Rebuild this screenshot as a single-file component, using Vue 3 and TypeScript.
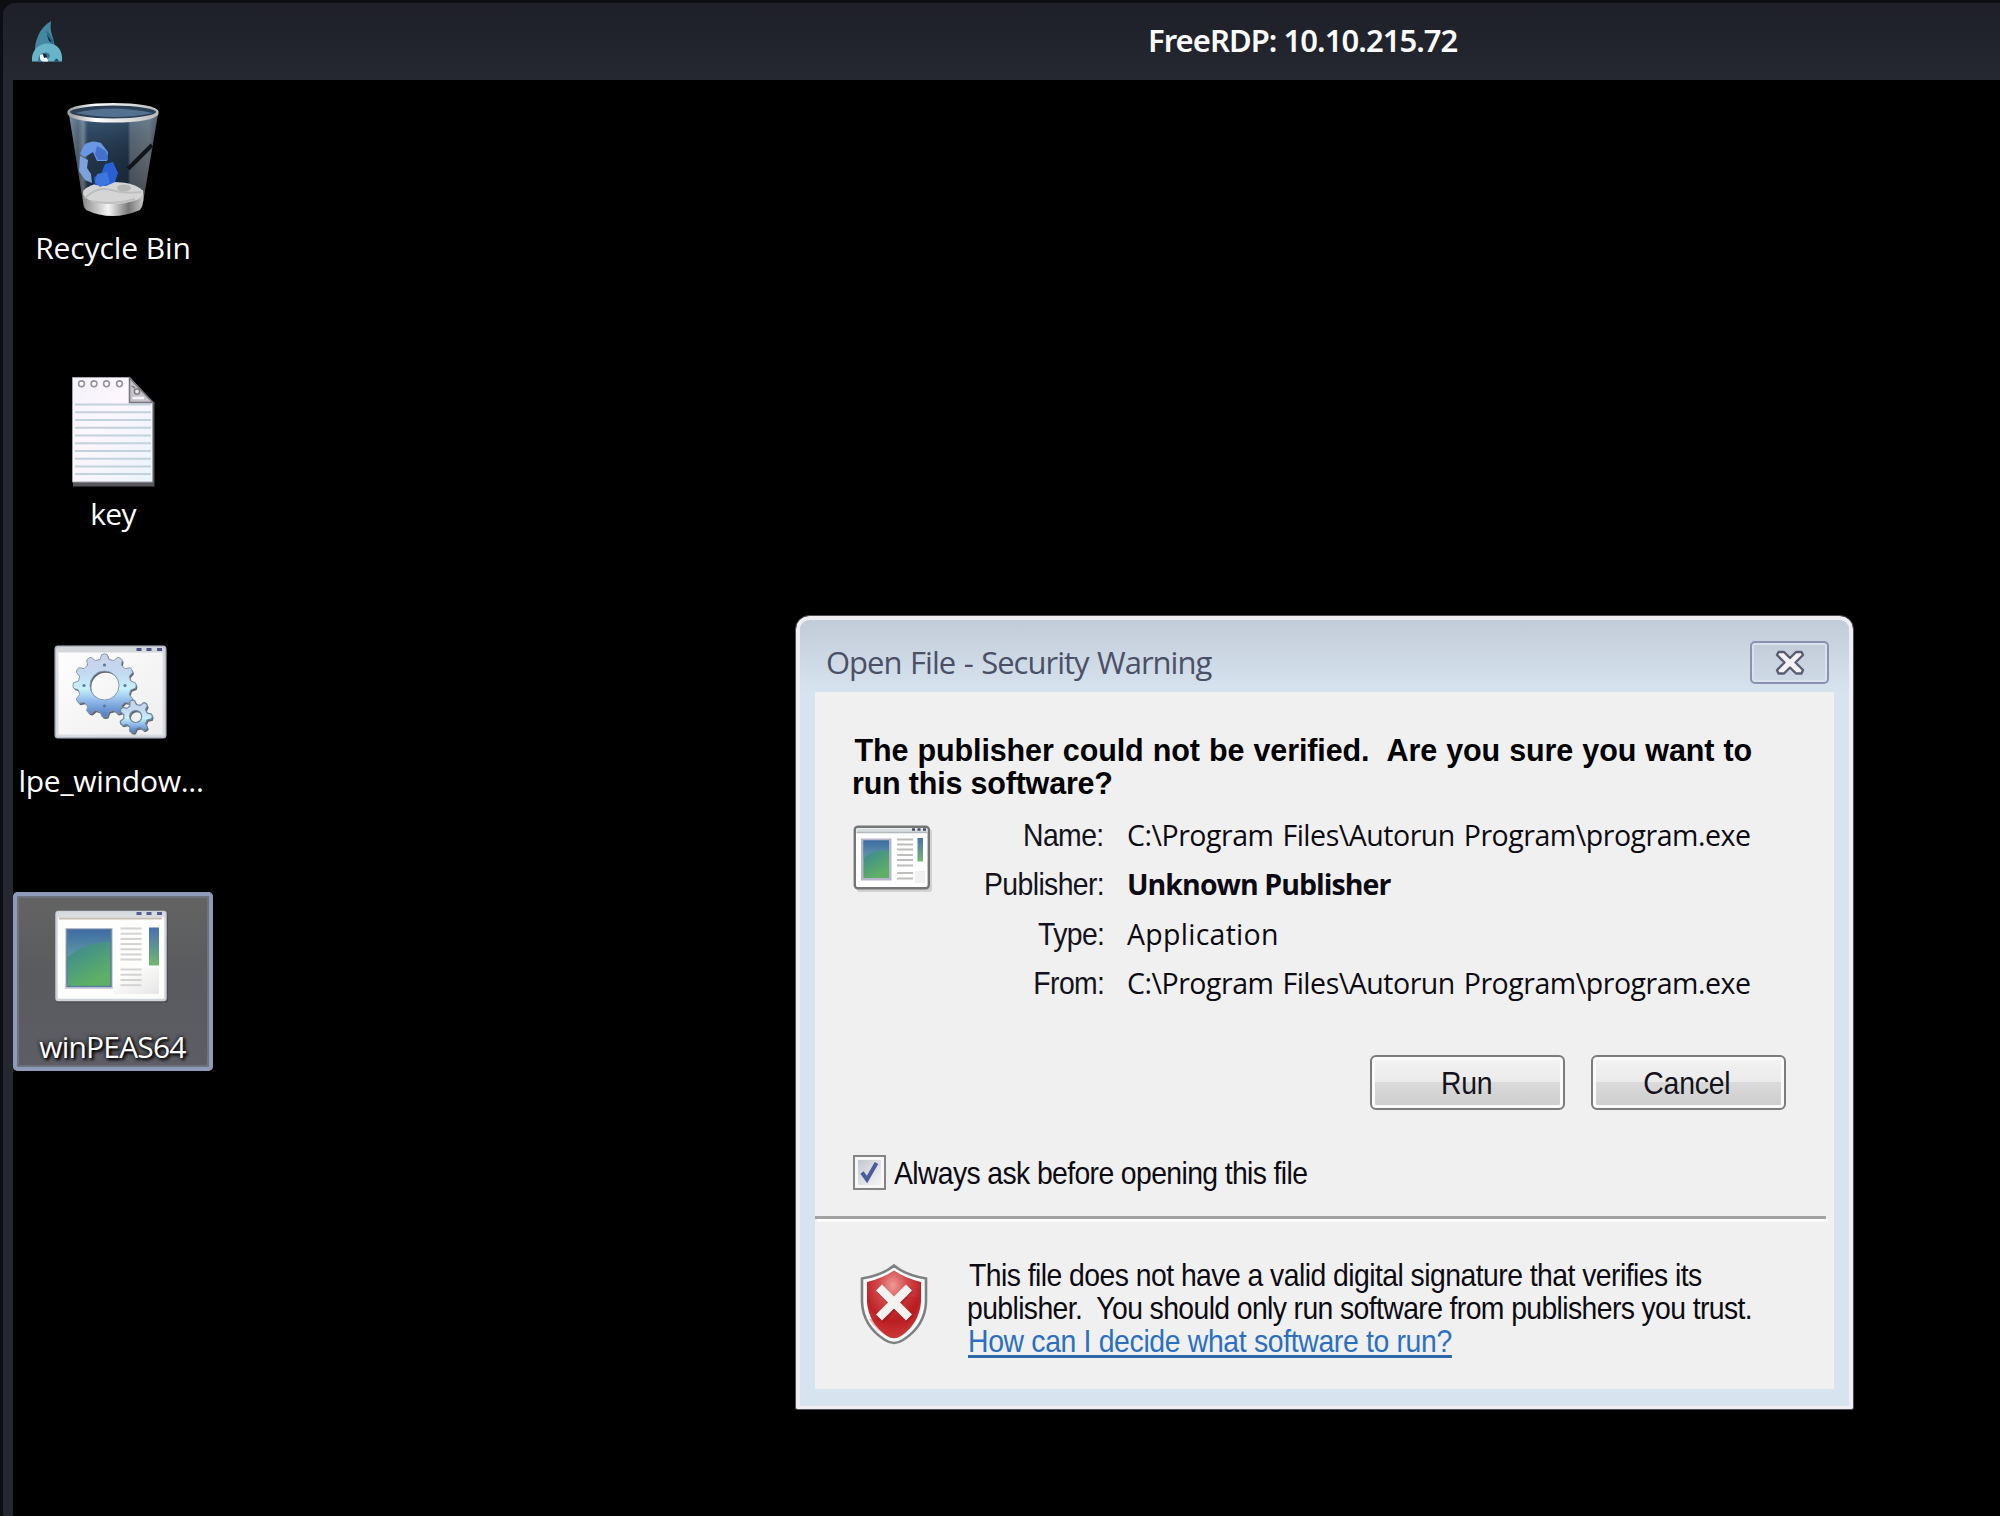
<script setup lang="ts">
interface Row {
  label: string
  value: string
  kind: string
}

const rows: Row[] = [
  { label: 'Name:', value: 'C:\\Program Files\\Autorun Program\\program.exe', kind: 'path' },
  { label: 'Publisher:', value: 'Unknown Publisher', kind: 'strong' },
  { label: 'Type:', value: 'Application', kind: 'plain' },
  { label: 'From:', value: 'C:\\Program Files\\Autorun Program\\program.exe', kind: 'path' },
]

// Outline of a cog with n rounded teeth
function gear(cx: number, cy: number, root: number, tip: number, n: number): string {
  const pts: string[] = []
  const step = (Math.PI * 2) / n
  const at = (r: number, a: number) => `${(cx + r * Math.cos(a)).toFixed(2)} ${(cy + r * Math.sin(a)).toFixed(2)}`
  for (let i = 0; i < n; i++) {
    const a = i * step
    pts.push(`${i ? 'L' : 'M'}${at(root, a - step * 0.32)}`)
    pts.push(`L${at(tip, a - step * 0.17)}`)
    pts.push(`Q${at(tip + 1.5, a)} ${at(tip, a + step * 0.17)}`)
    pts.push(`L${at(root, a + step * 0.32)}`)
  }
  return pts.join('') + 'Z'
}
function hole(cx: number, cy: number, r: number): string {
  return `M${cx - r} ${cy}a${r} ${r} 0 1 0 ${r * 2} 0a${r} ${r} 0 1 0 ${-r * 2} 0Z`
}
const bigGear = gear(91.5, 60.5, 26.5, 31, 12) + hole(91.5, 60.5, 14.5)
const smallGear = gear(122.7, 91.5, 12, 16, 7) + hole(122.7, 91.5, 6)
const textLines = [36.5, 41.7, 46.9, 52.1, 57.3, 62.5, 67.5, 77.5, 82.7, 88, 93.2]
const pageLines = [45.5, 53.2, 61, 68.7, 76.5, 84.2, 92, 99.7, 107.4, 115]
</script>

<template>
  <div class="screen">
    <header class="titlebar">
      <svg class="logo" width="34" height="44" viewBox="0 0 34 44">
        <path d="M4 34C3 22 8 8 20 1c-1 7 0 12 2 17 1 5 2 8 2 12Z" fill="#4388a0" />
        <path d="M15 10q5 4 7 11l1 6-4-4q-3-6-4-13Z" fill="#2e6b88" />
        <path d="M16 15l5 7-3-1Z" fill="#0d2942" />
        <path d="M1 41.500C0 31 7 23.500 17 23.500S32 31 31 41.500Z" fill="#69b4c9" />
        <path d="M7 41.500c0-6 3-9 8-9 3 0 4 2 4 4l-4 5Z" fill="#3c7890" />
        <path d="M9 35q4-2 4 2 4 0 4 4.500h-5q-4-1-3-6.500Z" fill="#f2fbfd" />
        <path d="M12 34q4-1 4 3l-3 1Z" fill="#12283f" />
        <path d="M23 41.500l2-3 2 1 1 2Z" fill="#1d4a68" />
      </svg>
      <h1 class="wintitle">FreeRDP: 10.10.215.72</h1>
    </header>

    <main class="desktop">
      <nav class="icons">
        <div class="cell">
          <svg width="200" height="134" viewBox="0 0 200 134">
            <defs>
              <linearGradient id="glass" x1="0" x2="1">
                <stop offset="0" stop-color="#8b97a3" /><stop offset=".1" stop-color="#5f6e7c" />
                <stop offset=".16" stop-color="#8a98a5" /><stop offset=".21" stop-color="#2b4259" />
                <stop offset=".66" stop-color="#22364a" /><stop offset=".69" stop-color="#66717c" />
                <stop offset=".9" stop-color="#7c8084" /><stop offset="1" stop-color="#4a4d50" />
              </linearGradient>
              <linearGradient id="shade" x1="0" y1="0" x2="0" y2="1">
                <stop offset="0" stop-color="#5a83ab" stop-opacity=".4" />
                <stop offset=".45" stop-color="#0a1420" stop-opacity=".25" />
                <stop offset="1" stop-color="#000" stop-opacity=".45" />
              </linearGradient>
              <linearGradient id="rim" x1="0" x2="1">
                <stop offset="0" stop-color="#9a9a9a" /><stop offset=".3" stop-color="#fff" />
                <stop offset=".7" stop-color="#dcdcdc" /><stop offset="1" stop-color="#b8b8b8" />
              </linearGradient>
              <linearGradient id="base" x1="0" x2="1">
                <stop offset="0" stop-color="#8a8a8a" /><stop offset=".42" stop-color="#f4f4f4" />
                <stop offset=".75" stop-color="#777" /><stop offset="1" stop-color="#c9c9c9" />
              </linearGradient>
            </defs>
            <path d="M56 22L71 116Q98 128 129 116L145 22Z" fill="url(#glass)" />
            <path d="M56 22L71 116Q98 128 129 116L145 22Z" fill="url(#shade)" />
            <path d="M139 53L115 77" stroke="#11161c" stroke-width="4" />
            <path d="M70 98Q69 112 73 118Q99 130 127 118Q132 110 130 98Z" fill="url(#base)" />
            <ellipse cx="100" cy="101" rx="30" ry="11" fill="#d5d5d5" />
            <path d="M72 106q12-12 26-8t30 2M78 109q20 5 44-2" stroke="#bdbfbf" stroke-width="2" fill="none" />
            <ellipse cx="111" cy="96" rx="7" ry="3.500" fill="#b5b6b6" />
            <path d="M71 53q8-6 17-2l7 9-1 9-10 0-4-9-8 5-5-3Z" fill="#6a97e2" />
            <path d="M84 54l9 5 2 9-10 0-3-6Z" fill="#4471cf" />
            <path d="M67 64l8 4-1 8 4 6 1 9-7-3-6-9Z" fill="#7aa3de" />
            <path d="M92 72l8-2 5 11-3 9-9 4-11-1-1-8 7-3Z" fill="#285fd2" />
            <path d="M84 82l10-2 3 11-10 4-5-5Z" fill="#3f76de" />
            <ellipse cx="100" cy="20" rx="44" ry="7.500" fill="#2c4055" />
            <path d="M62 21q36-9 78 0-36 8-78 0Z" fill="#527090" />
            <ellipse cx="100" cy="20" rx="44.500" ry="7.800" fill="none" stroke="url(#rim)" stroke-width="2.600" />
            <path d="M55.500 21Q60 29 100 29T144.500 21" fill="none" stroke="url(#rim)" stroke-width="3.200" />
          </svg>
          <span class="name">Recycle Bin</span>
        </div>

        <div class="cell">
          <svg width="200" height="134" viewBox="0 0 200 134">
            <defs>
              <linearGradient id="page" x1="0" y1="0" x2="1" y2="1">
                <stop offset="0" stop-color="#f4f4fa" /><stop offset=".4" stop-color="#fdf6fd" />
                <stop offset="1" stop-color="#eaf3fb" />
              </linearGradient>
            </defs>
            <path d="M60 19H117L141.500 44V127.500H60Z" fill="#56565c" />
            <path d="M59.500 18.500H117L139.500 44V123H59.500Z" fill="url(#page)" stroke="#a5a3aa" stroke-width="1" />
            <g stroke="#c2d2dc" stroke-width="2">
              <line v-for="y in pageLines" :key="y" x1="62" x2="138" :y1="y" :y2="y" />
            </g>
            <g fill="#fff" stroke="#97939c" stroke-width="1.600">
              <circle v-for="x in [68.500, 81, 93.500, 106.500]" :key="x" :cx="x" cy="24.800" r="2.900" />
            </g>
            <path d="M116.500 19L140 43.500H116.500Z" fill="#c4c1c7" stroke="#77737b" stroke-width="1.500" />
            <path d="M119.500 39H131" stroke="#f5f3f6" stroke-width="2.500" fill="none" />
            <circle cx="124" cy="32.500" r="2.600" fill="#e6e3e8" stroke="#77737b" stroke-width="1.300" />
            <path d="M119 27l3 2" stroke="#77737b" stroke-width="1.500" />
          </svg>
          <span class="name tight">key</span>
        </div>

        <div class="cell">
          <svg width="200" height="134" viewBox="0 0 200 134">
            <defs>
              <linearGradient id="metal" x1="0" y1="0" x2="0" y2="1">
                <stop offset="0" stop-color="#cdd0e8" /><stop offset=".3" stop-color="#c3d9f0" />
                <stop offset=".55" stop-color="#c8f0fa" /><stop offset=".75" stop-color="#8fb8ea" />
                <stop offset="1" stop-color="#4a78bf" />
              </linearGradient>
              <linearGradient id="sheet" x1="0" y1="0" x2="1" y2="1">
                <stop offset="0" stop-color="#fff" /><stop offset="1" stop-color="#ededed" />
              </linearGradient>
            </defs>
            <rect x="42.500" y="21.500" width="110" height="91" rx="2.500" fill="url(#sheet)" stroke="#b3b9c1" stroke-width="2" />
            <path d="M43.500 22.500H151.500V27.500H43.500Z" fill="#d3d6da" />
            <path d="M44.500 28V110.500H150.500V28" fill="none" stroke="#d9dde1" stroke-width="2" />
            <path d="M123.500 24.500h5M133.500 24.500h5M144 24.500h5" stroke="#4d5384" stroke-width="3" />
            <g transform="translate(1.300 1.800)" fill="#5f6571">
              <path :d="bigGear" fill-rule="evenodd" /><path :d="smallGear" fill-rule="evenodd" />
            </g>
            <path :d="bigGear" fill="url(#metal)" fill-rule="evenodd" stroke="#8798ac" stroke-width="1" />
            <path :d="smallGear" fill="url(#metal)" fill-rule="evenodd" stroke="#71879f" stroke-width="1.200" />
            <g fill="#587c96">
              <circle cx="91.500" cy="40" r="1.600" /><circle cx="91.500" cy="81" r="1.600" />
              <circle cx="71" cy="60.500" r="1.600" /><circle cx="112" cy="60.500" r="1.600" />
            </g>
          </svg>
          <span class="name lpe">lpe_window...</span>
        </div>

        <div class="cell selected">
          <svg width="200" height="134" viewBox="0 0 200 134">
            <defs>
              <linearGradient id="scene" x1="0" y1="0" x2=".4" y2="1">
                <stop offset="0" stop-color="#3f7d98" /><stop offset=".5" stop-color="#469583" />
                <stop offset="1" stop-color="#5fb066" />
              </linearGradient>
              <linearGradient id="sky" x1="0" y1="0" x2="0" y2="1">
                <stop offset="0" stop-color="#3f6ca4" /><stop offset="1" stop-color="#5f9aa6" />
              </linearGradient>
              <linearGradient id="strip" x1="0" y1="0" x2="0" y2="1">
                <stop offset="0" stop-color="#4a70b2" /><stop offset="1" stop-color="#72b86f" />
              </linearGradient>
              <linearGradient id="corner" x1="0" y1="0" x2="1" y2="1">
                <stop offset=".2" stop-color="#fefefd" /><stop offset="1" stop-color="#e6e6e6" />
              </linearGradient>
            </defs>
            <rect x="44" y="21" width="111" height="90" rx="2" fill="#3c3d40" opacity=".45" />
            <rect x="43.500" y="20" width="109" height="88" rx="2" fill="#fefefd" stroke="#cdd3d9" stroke-width="2.400" />
            <path d="M44 20.500H152V25.500H44Z" fill="#d9dde2" />
            <path d="M46 26.500H149" stroke="#c5bdb4" stroke-width="2" />
            <path d="M123.500 21.500h5M133.500 21.500h5M144 21.500h5" stroke="#555c8c" stroke-width="3" />
            <rect x="100" y="76" width="46" height="26" fill="url(#corner)" />
            <rect x="52" y="36" width="48" height="61" fill="#d9cfe0" />
            <rect x="54" y="37.500" width="44" height="57" fill="url(#scene)" stroke="#587d9c" stroke-width="1.500" />
            <path d="M54.500 38H97.500V50Q72 50 54.500 65Z" fill="url(#sky)" />
            <g stroke="#d3d3d3" stroke-width="2">
              <line v-for="y in textLines" :key="y" x1="107.500" x2="128.500" :y1="y" :y2="y" />
            </g>
            <rect x="136" y="35.500" width="10" height="38" fill="url(#strip)" />
          </svg>
          <span class="name peas">winPEAS64</span>
        </div>
      </nav>

      <section class="dialog">
        <header class="caption">
          <h2>Open File - Security Warning</h2>
          <div class="close">
            <svg width="32" height="26" viewBox="0 0 32 26">
              <path d="M4.500 2H10L16 8 22 2H27.500L29 5 21.500 12.500 29 20 27.500 23.500H22L16 17.500 10 23.500H4.500L3 20 10.500 12.500 3 5Z" fill="#f4f2f5" stroke="#5b5e73" stroke-width="2.400" stroke-linejoin="round" />
            </svg>
          </div>
        </header>

        <div class="panel">
          <h3>
            <span class="h-a">The publisher could not be verified.&nbsp; Are you sure you want to</span>
            <span class="h-b">run this software?</span>
          </h3>

          <div class="details">
            <svg class="app" width="84" height="72" viewBox="0 0 84 72">
              <rect x="4" y="4" width="75" height="63" rx="3" fill="#000" opacity=".13" />
              <rect x="1.800" y="1.800" width="74" height="61.500" rx="3" fill="#fefefe" stroke="#747676" stroke-width="2.400" />
              <path d="M3.500 3.500H74.500V7H3.500Z" fill="#d8dde0" />
              <path d="M3.500 7.500H74.500" stroke="#b4b9be" stroke-width="1.300" />
              <path d="M59 4.500h3M64.500 4.500h3M70 4.500h3" stroke="#4a4d60" stroke-width="2.500" />
              <rect x="62" y="46" width="10" height="12" fill="#f1f1f1" />
              <rect x="8" y="13.500" width="30.500" height="42" fill="#b9b5c9" />
              <rect x="10.500" y="15.500" width="25.500" height="37.500" fill="url(#scene)" />
              <path d="M10.500 15.500H36V25Q20 25 10.500 33Z" fill="url(#sky)" />
              <g stroke="#bdbdbc" stroke-width="1.800">
                <path d="M44 14.500h16M44 19.500h16M44 24.500h16M44 30h16M44 35h16M44 40.500h16M44 48h16M44 53.500h16" />
              </g>
              <rect x="64.500" y="13" width="5.500" height="23.500" fill="url(#strip)" />
            </svg>
            <dl>
              <div v-for="r in rows" :key="r.label" class="row">
                <dt><span class="sq">{{ r.label }}</span></dt>
                <dd :class="r.kind">{{ r.value }}</dd>
              </div>
            </dl>
          </div>

          <div class="buttons">
            <button type="button"><span class="sq">Run</span></button>
            <button type="button"><span class="sq">Cancel</span></button>
          </div>

          <div class="ask">
            <div class="box">
              <svg width="22" height="24" viewBox="0 0 22 24">
                <path d="M4 12.500L9 19.500 18.500 3" fill="none" stroke="#4a5c9c" stroke-width="4" />
              </svg>
            </div>
            <span class="sq asktext">Always ask before opening this file</span>
          </div>

          <hr />

          <div class="footer">
            <svg class="shield" width="70" height="82" viewBox="0 0 70 82">
              <defs>
                <radialGradient id="red" cx=".48" cy=".22" r=".75">
                  <stop offset="0" stop-color="#ee9a96" /><stop offset=".35" stop-color="#d24a4c" />
                  <stop offset=".7" stop-color="#be2125" /><stop offset="1" stop-color="#d64547" />
                </radialGradient>
              </defs>
              <path d="M35 1.500Q46 11 67 14.500V38Q66 62 44 76Q35 82 26 76Q4 62 3 38V14.500Q24 11 35 1.500Z" fill="#fbfbfb" stroke="#7d8181" stroke-width="2.600" />
              <path d="M35 6.500Q47 14.500 62 18V38Q60.500 59 42 72Q35 76.500 28 72Q9.500 59 8 38V18Q23 14.500 35 6.500Z" fill="url(#red)" />
              <path d="M10 55Q25 55 35 42T61 34Q61 60 42 72Q35 76.500 28 72Q17 66 10 55Z" fill="#b01318" opacity=".3" />
              <path d="M20 24L50 54M50 24L20 54" stroke="#861519" stroke-width="9" opacity=".35" transform="translate(1 1.500)" />
              <path d="M20 23.500L50 53.500M50 23.500L20 53.500" stroke="#f4f1f1" stroke-width="8.500" />
            </svg>
            <p>
              <span class="sq l1">This file does not have a valid digital signature that verifies its</span>
              <span class="sq l2">publisher.&nbsp; You should only run software from publishers you trust.</span>
              <a class="sq l3">How can I decide what software to run?</a>
            </p>
          </div>
        </div>
      </section>
    </main>
  </div>
</template>

<style>
body {
  margin: 0;
  background: #0d0e12;
  overflow: hidden;
}
</style>

<style scoped>
.screen {
  box-sizing: border-box;
  width: 2000px;
  height: 1516px;
  padding: 3px 0 0 3px;
  background: #0d0e12;
  overflow: hidden;
  font-family: "Liberation Sans", sans-serif;
}
h1, h2, h3, p, dl, dd { margin: 0; font-weight: normal; }
.titlebar {
  box-sizing: border-box;
  height: 77px;
  display: flex;
  align-items: flex-start;
  padding: 17px 0 0 28px;
  border-radius: 12px 0 0 0;
  background: linear-gradient(#1e1f28, #252831);
}
.logo { display: block; }
.wintitle {
  margin: 0 0 0 1083px;
  font: 600 31px/40px "Noto Sans", sans-serif;
  letter-spacing: -0.95px;
  color: #fbfbfb;
  white-space: nowrap;
}
.desktop {
  position: relative;
  height: 1436px;
  border-left: 10px solid #242730;
  background: #000;
}
.icons {
  display: flex;
  flex-direction: column;
  gap: 86.67px;
  width: 200px;
  padding-top: 12px;
}
.cell {
  box-sizing: border-box;
  width: 200px;
  height: 179px;
  margin-bottom: 1px;
  display: flex;
  flex-direction: column;
  align-items: center;
}
.cell svg { display: block; flex: none; }
.selected {
  border-radius: 5px;
  background: linear-gradient(#646464, #5a5b5e 45%, #5d5d65);
  box-shadow: inset 0 0 0 4px #8f99b8, inset 0 0 0 6px #6e727c;
}
.name {
  margin-top: 1.500px;
  font: 30px/40px "Open Sans", sans-serif;
  letter-spacing: -0.1px;
  color: #fff;
  white-space: nowrap;
}
.tight { letter-spacing: -0.7px; }
.lpe { letter-spacing: -0.25px; margin-left: -4px; }
.peas {
  margin-left: -1px;
  letter-spacing: -0.8px;
  text-shadow: 2px 2px 3px #000, 0 0 4px #000;
}
.dialog {
  box-sizing: border-box;
  position: absolute;
  left: 783px;
  top: 536px;
  width: 1057px;
  height: 793px;
  padding: 0 15px 17px;
  border: 4px solid #f0edf3;
  border-bottom-width: 3px;
  border-radius: 13px 13px 1px 1px;
  outline: 1.500px solid #504c54;
  outline-offset: -0.5px;
  background: linear-gradient(#c1ccd8, #d7e3ef 72px, #d7e3ef);
}
.caption {
  height: 72px;
  display: flex;
  justify-content: space-between;
}
h2 {
  margin: 21px 0 0 11px;
  height: 42px;
  font: 31px/42px "Open Sans", sans-serif;
  letter-spacing: -1px;
  word-spacing: 1.5px;
  color: #4b5066;
  white-space: nowrap;
}
.close {
  box-sizing: border-box;
  width: 79px;
  height: 43px;
  margin: 21px 5px 0 0;
  display: flex;
  align-items: center;
  justify-content: center;
  border: 2.500px solid #8b92b0;
  border-radius: 5px;
  box-shadow: inset 0 0 0 2px #d9e1ec;
  background: linear-gradient(#c3cdd9, #cfdae7);
}
.panel {
  height: 697px;
  background: #f0f0f0;
}
h3 {
  display: flex;
  flex-direction: column;
  padding: 42px 0 0 38px;
  font: bold 30.5px/33px "Liberation Sans", sans-serif;
  color: #000;
  white-space: nowrap;
}
.h-a { margin-left: 1.500px; letter-spacing: -0.12px; word-spacing: 0.8px; }
.h-b { margin-left: -1px; letter-spacing: -0.2px; }
.details {
  display: flex;
  padding: 10px 0 0 38px;
}
.app { flex: none; margin-top: 15px; }
dl { flex: 1; padding-top: 1px; }
.row {
  display: flex;
  height: 49.3px;
  line-height: 49.3px;
}
dt { width: 167px; text-align: right; color: #14121c; }
dd {
  margin-left: 23px;
  font-family: "Open Sans", sans-serif;
  font-size: 28.5px;
  letter-spacing: -0.47px;
  word-spacing: 2px;
  color: #0c0a12;
  white-space: nowrap;
}
.strong { font-weight: bold; letter-spacing: -0.95px; word-spacing: 0; }
.plain { letter-spacing: 0.27px; }
.sq {
  display: inline-block;
  font-size: 30.5px;
  letter-spacing: -0.65px;
  transform: scaleX(0.93);
  transform-origin: 0 50%;
  white-space: nowrap;
}
dt .sq { transform-origin: 100% 50%; }
.buttons {
  display: flex;
  gap: 25.5px;
  padding: 47px 0 0 555px;
}
button {
  box-sizing: border-box;
  width: 195px;
  height: 54.500px;
  padding: 0;
  border: 2.500px solid #7c7c7c;
  border-radius: 6px;
  background: linear-gradient(#f3f3f3, #ebebeb 48%, #dadada 50%, #cdcdcd);
  box-shadow: inset 0 0 0 3px #fafafa;
  font-family: inherit;
  color: #14121c;
}
button .sq { margin: 2px 2px 0 0; letter-spacing: -0.2px; transform-origin: 50% 50%; line-height: 44px; }
.ask {
  display: flex;
  height: 35px;
  padding: 45.500px 0 0 38px;
  color: #0c0a12;
}
.box {
  box-sizing: border-box;
  width: 33px;
  height: 35px;
  border: 2.500px solid #858585;
  padding: 3px;
  background: linear-gradient(135deg, #c4c8d0, #f5f5f7) content-box, #f7f7f7;
}
.box svg { display: block; }
.asktext { margin-left: 8px; line-height: 37px; letter-spacing: -0.67px; }
hr {
  width: 1011px;
  height: 3px;
  margin: 26px 0 0;
  border: 0;
  background: #a2a2a2;
  box-shadow: 2px 2.500px 0 #fff;
}
.footer {
  display: flex;
  padding: 45px 0 0 44px;
}
.shield { flex: none; }
.footer p {
  display: flex;
  flex-direction: column;
  margin: -5.500px 0 0 39.500px;
  color: #0c0a12;
}
.footer .sq { line-height: 33.300px; align-self: flex-start; }
.l1 { letter-spacing: -0.59px; }
.l2 { letter-spacing: -0.66px; margin-left: -2px; }
.footer .l3 {
  letter-spacing: -0.36px;
  margin-left: -0.5px;
  color: #2a6fc4;
  text-decoration: underline;
  text-decoration-thickness: 2.500px;
  text-decoration-color: #2c68aa;
  text-decoration-skip-ink: none;
  text-underline-offset: 3px;
}
</style>
